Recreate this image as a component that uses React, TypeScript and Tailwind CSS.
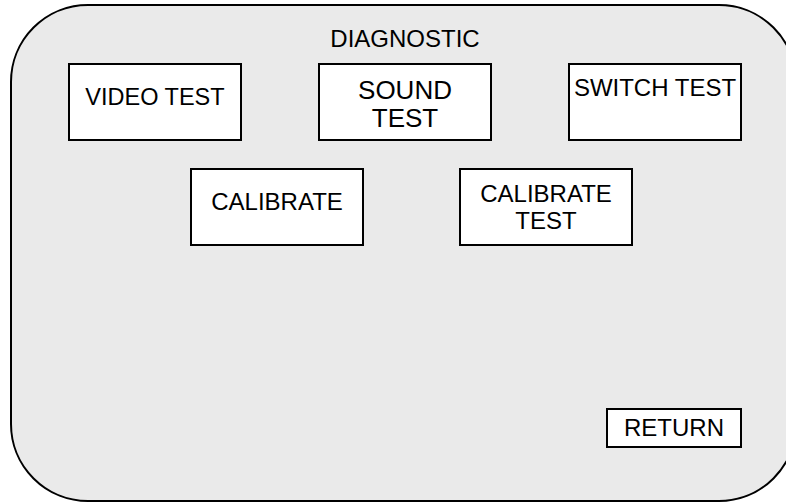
import React from "react";

type Item = {
  label: string[];
  pad: string;
  size?: string;
};

const topRow: Item[] = [
  { label: ["VIDEO TEST"], pad: "pt-[18px]", size: "text-[23.5px] leading-[28px]" },
  { label: ["SOUND", "TEST"], pad: "pt-[11px]", size: "text-[26px] leading-[28px]" },
  { label: ["SWITCH TEST"], pad: "pt-[9px]" },
];

const secondRow: Item[] = [
  { label: ["CALIBRATE"], pad: "pt-[18px]" },
  { label: ["CALIBRATE", "TEST"], pad: "pt-[10px]" },
];

function MenuBox({ label, pad, size }: Item) {
  return (
    <button
      className={`flex h-[78px] w-[174px] flex-col items-center border-2 border-black bg-white text-black ${pad} ${
        size ?? "text-[24px] leading-[27px]"
      }`}
    >
      {label.map((line) => (
        <span key={line} className="whitespace-nowrap">
          {line}
        </span>
      ))}
    </button>
  );
}

export default function App() {
  return (
    <div className="h-[503px] w-[786px] overflow-hidden bg-white font-['Liberation_Sans',Arial,sans-serif] text-black">
      <div className="ml-[10px] mt-[4px] h-[498px] w-[787px] rounded-[78px] border-2 border-black bg-[#eaeaea]">
        <div className="ml-[56px] w-[674px] pt-[19px]">
          <h1 className="text-center text-[24px] leading-[28px]">DIAGNOSTIC</h1>

          <div className="mt-[10px] flex justify-between">
            {topRow.map((item) => (
              <MenuBox key={item.label.join(" ")} {...item} />
            ))}
          </div>

          <div className="mt-[27px] flex gap-[95px] pl-[122px]">
            {secondRow.map((item) => (
              <MenuBox key={item.label.join(" ")} {...item} />
            ))}
          </div>

          <div className="mt-[162px] flex justify-end">
            <button className="h-[40px] w-[136px] border-2 border-black bg-white text-[24px] leading-[28px] text-black">
              RETURN
            </button>
          </div>
        </div>
      </div>
    </div>
  );
}
